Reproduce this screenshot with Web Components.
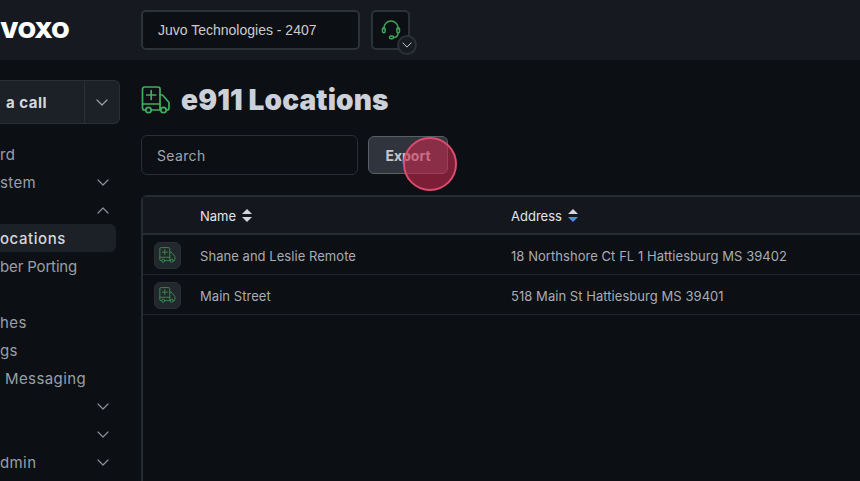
<!DOCTYPE html>
<html>
<head>
<meta charset="utf-8">
<title>e911 Locations</title>
<style>
    html, body { margin: 0; height: 100%; overflow: hidden; background: #0c0f14; }
    body { font-family: "Inter", "Liberation Sans", sans-serif; }
    voxo-app { width: 860px; height: 481px; }
</style>
</head>
<body>
<voxo-app>
    <voxo-topbar slot="top"></voxo-topbar>
    <voxo-sidebar slot="side">
        <voxo-call-button></voxo-call-button>
        <voxo-nav-item label="rd"></voxo-nav-item>
        <voxo-nav-item label="stem" chevron="down"></voxo-nav-item>
        <voxo-nav-item chevron="up"></voxo-nav-item>
        <voxo-nav-item active label="ocations"></voxo-nav-item>
        <voxo-nav-item tight label="ber Porting"></voxo-nav-item>
        <voxo-nav-item></voxo-nav-item>
        <voxo-nav-item label="hes"></voxo-nav-item>
        <voxo-nav-item label="gs"></voxo-nav-item>
        <voxo-nav-item indent label="Messaging"></voxo-nav-item>
        <voxo-nav-item chevron="down"></voxo-nav-item>
        <voxo-nav-item chevron="down"></voxo-nav-item>
        <voxo-nav-item label="dmin" chevron="down"></voxo-nav-item>
    </voxo-sidebar>
    <voxo-page-title slot="main">e911 Locations</voxo-page-title>
    <voxo-toolbar slot="main"></voxo-toolbar>
    <voxo-table slot="main">
        <voxo-row name="Shane and Leslie Remote" address="18 Northshore Ct FL 1 Hattiesburg MS 39402"></voxo-row>
        <voxo-row name="Main Street" address="518 Main St Hattiesburg MS 39401"></voxo-row>
    </voxo-table>
</voxo-app>

<script>
const truckIcon = `
    <svg viewBox="0 0 30 28" fill="none" stroke="currentColor" stroke-width="1.7" stroke-linecap="round" stroke-linejoin="round">
        <path d="M4.500 24H3.500a2 2 0 0 1-2-2V3a2 2 0 0 1 2-2H17a2 2 0 0 1 2 2V24"/>
        <path d="M1.500 18H19"/>
        <path d="M19 9h2.500l6.500 7.500V22a2 2 0 0 1-2 2H25.500"/>
        <path d="M10.500 24h9"/>
        <circle cx="7.500" cy="24" r="2.700"/>
        <circle cx="22.500" cy="24" r="2.700"/>
        <path d="M10.200 4.500v9M5.700 9h9"/>
    </svg>`;

const chevron = (dir) => `
    <svg viewBox="0 0 12 7" width="12" height="7" fill="none" stroke="currentColor" stroke-width="1.2" stroke-linecap="round" stroke-linejoin="round">
        <path d="${dir === "up" ? "M1 6l5-5 5 5" : "M1 1l5 5 5-5"}"/>
    </svg>`;

class VoxoApp extends HTMLElement {
    constructor() {
        super();
        this.attachShadow({mode: "open"});
    }

    connectedCallback() {
        this.shadowRoot.innerHTML = `
        <style>
            :host { display: grid; grid-template-columns: 130px 1fr; grid-template-rows: 60px 1fr; }
            .top { grid-column: 1 / 3; }
            .main { padding: 20px 0 0 11px; display: flex; flex-direction: column; overflow: hidden; }
        </style>
        <div class="top"><slot name="top"></slot></div>
        <div class="side"><slot name="side"></slot></div>
        <div class="main"><slot name="main"></slot></div>
        `;
    }
}

class VoxoTopbar extends HTMLElement {
    constructor() {
        super();
        this.attachShadow({mode: "open"});
    }

    connectedCallback() {
        this.shadowRoot.innerHTML = `
        <style>
            :host { display: flex; align-items: center; height: 60px; background: #161a20; }
            .logo { width: 141px; }
            .logo span {
                display: inline-block; transform: scaleX(1.07); transform-origin: left center;
                font: 900 22px "Inter", sans-serif; color: #fff;
            }
            .account {
                width: 219px; height: 40px; box-sizing: border-box; display: flex; align-items: center;
                padding-left: 15px; background: #0c0f14; border: 2px solid #2d3138; border-radius: 5px;
                font: 14px "Liberation Sans", sans-serif; color: #c9ccd1;
            }
            .support {
                position: relative; width: 39px; height: 40px; box-sizing: border-box; margin-left: 11px;
                display: flex; align-items: center; justify-content: center;
                background: #0c0f14; border: 2px solid #2d3138; border-radius: 5px; color: #3fa45b;
            }
            .support svg.headset { width: 20px; height: 20px; margin-top: -1px; }
            .badge {
                position: absolute; right: -9px; bottom: -7px; width: 20px; height: 20px; box-sizing: border-box;
                display: flex; align-items: center; justify-content: center;
                border-radius: 50%; background: #171b22; border: 2px solid #2d3138; color: #c9ccd1;
            }
            .badge svg { width: 10px; height: 6px; }
        </style>
        <div class="logo"><span>VOXO</span></div>
        <div class="account">Juvo Technologies - 2407</div>
        <div class="support">
            <svg class="headset" viewBox="0 0 20 20" fill="none" stroke="currentColor" stroke-width="1.5" stroke-linecap="round" stroke-linejoin="round">
                <path d="M3 9V8a7 7 0 0 1 14 0v1"/>
                <rect x="1.500" y="7.800" width="2.600" height="5" rx="1.300"/>
                <rect x="15.900" y="7.800" width="2.600" height="5" rx="1.300"/>
                <path d="M17 13c0 3-2 4.500-4.500 4.500"/>
                <rect x="8.500" y="16" width="4" height="2.800" rx="1.400"/>
            </svg>
            <div class="badge">${chevron("down")}</div>
        </div>
        `;
    }
}

class VoxoSidebar extends HTMLElement {
    constructor() {
        super();
        this.attachShadow({mode: "open"});
    }

    connectedCallback() {
        this.shadowRoot.innerHTML = `
        <style>
            :host { display: block; padding: 20px 0 0 0; }
            .nav { display: flex; flex-direction: column; margin-top: 16px; }
        </style>
        <slot name="call"></slot>
        <div class="nav"><slot></slot></div>
        `;
        this.querySelector("voxo-call-button").slot = "call";
    }
}

class VoxoCallButton extends HTMLElement {
    constructor() {
        super();
        this.attachShadow({mode: "open"});
    }

    connectedCallback() {
        this.shadowRoot.innerHTML = `
        <style>
            :host {
                display: flex; width: 120px; height: 44px; box-sizing: border-box;
                background: #1c2027; border: 1px solid #2a2e35; border-left: 0; border-radius: 0 6px 6px 0; color: #d5d8dd;
            }
            .label {
                flex: 1; display: flex; align-items: center; padding-left: 6px;
                font: 700 15px "Inter", sans-serif; letter-spacing: .5px;
            }
            .drop {
                width: 34px; display: flex; align-items: center; justify-content: center;
                border-left: 1px solid #2a2e35; color: #9ca1a8;
            }
        </style>
        <div class="label">a call</div>
        <div class="drop">${chevron("down")}</div>
        `;
    }
}

class VoxoNavItem extends HTMLElement {
    constructor() {
        super();
        this.attachShadow({mode: "open"});
    }

    connectedCallback() {
        const label = this.getAttribute("label") || "";
        const dir = this.getAttribute("chevron");
        this.shadowRoot.innerHTML = `
        <style>
            :host {
                display: flex; align-items: center; width: 116px; height: 28px; box-sizing: border-box;
                padding: 0 7px 0 0; border-radius: 0 6px 6px 0;
                font: 400 15px "Inter", sans-serif; letter-spacing: .4px; color: #9a9fa7;
            }
            :host([indent]) { padding-left: 5px; }
            :host([tight]) { letter-spacing: -.15px; }
            :host([active]) { background: #1c2027; color: #d5d8dd; font-weight: 500; letter-spacing: .55px; }
            .label { flex: 1; white-space: nowrap; }
            .chev { color: #8b9098; display: flex; }
        </style>
        <span class="label">${label}</span>
        ${dir ? `<span class="chev">${chevron(dir)}</span>` : ""}
        `;
    }
}

class VoxoPageTitle extends HTMLElement {
    constructor() {
        super();
        this.attachShadow({mode: "open"});
    }

    connectedCallback() {
        this.shadowRoot.innerHTML = `
        <style>
            :host {
                flex: none; display: flex; align-items: center; gap: 10px; height: 40px;
                font: 900 28px "Inter", sans-serif; letter-spacing: .15px; color: #ccd1d9;
            }
            .icon { width: 30px; height: 28px; color: #43ad5f; display: flex; }
        </style>
        <span class="icon">${truckIcon}</span>
        <slot></slot>
        `;
    }
}

class VoxoToolbar extends HTMLElement {
    constructor() {
        super();
        this.attachShadow({mode: "open"});
    }

    connectedCallback() {
        this.shadowRoot.innerHTML = `
        <style>
            :host { flex: none; display: flex; align-items: center; gap: 10px; margin-top: 15px; height: 40px; }
            .search {
                width: 217px; height: 40px; box-sizing: border-box; padding-left: 15px;
                display: flex; align-items: center;
                border: 1px solid #2a2e35; border-radius: 6px;
                font: 14px "Inter", sans-serif; letter-spacing: .35px; color: #a0a5ad;
            }
            .export {
                position: relative; width: 80px; height: 38px; box-sizing: border-box;
                display: flex; align-items: center; justify-content: center;
                background: #2f343d; border: 1px solid #5a5f68; border-radius: 6px;
                font: 700 14px "Inter", sans-serif; color: #c3c8d0;
            }
            .click {
                position: absolute; left: 34px; top: 0; width: 54px; height: 54px; box-sizing: border-box;
                border-radius: 50%; background: rgba(205, 42, 78, .58); border: 2.5px solid #dd4c6e;
            }
        </style>
        <div class="search">Search</div>
        <div class="export">Export<span class="click"></span></div>
        `;
    }
}

class VoxoTable extends HTMLElement {
    constructor() {
        super();
        this.attachShadow({mode: "open"});
    }

    connectedCallback() {
        const sort = (down) => `
            <svg viewBox="0 0 10 13" width="10" height="13">
                <path d="M5 0l5 5H0z" fill="#d3d6db"/>
                <path d="M5 13L0 8h10z" fill="${down}"/>
            </svg>`;
        this.shadowRoot.innerHTML = `
        <style>
            :host {
                flex: none; display: block; margin-top: 20px; border-top: 2px solid #262a31; border-left: 2px solid #262a31;
                border-top-left-radius: 6px; height: 300px;
            }
            .head {
                display: grid; grid-template-columns: 57px 311px 1fr; align-items: center;
                height: 38px; box-sizing: border-box; padding-top: 1px; background: #14181e; border-bottom: 2px solid #262a31;
                font: 400 13px "Inter", sans-serif; color: #e3e5e8;
            }
            .cell { display: flex; align-items: center; gap: 6px; }
        </style>
        <div class="head">
            <span></span>
            <span class="cell">Name ${sort("#d3d6db")}</span>
            <span class="cell">Address ${sort("#4a8fe0")}</span>
        </div>
        <slot></slot>
        `;
    }
}

class VoxoRow extends HTMLElement {
    constructor() {
        super();
        this.attachShadow({mode: "open"});
    }

    connectedCallback() {
        this.shadowRoot.innerHTML = `
        <style>
            :host {
                display: grid; grid-template-columns: 57px 311px 1fr; align-items: center;
                height: 40px; box-sizing: border-box; padding-top: 1px; border-bottom: 1.5px solid #23272d;
                font: 13px "Inter", sans-serif; letter-spacing: .05px; color: #a9adb4;
            }
            .text { padding-top: 1px; }
            .badge {
                width: 27px; height: 27px; box-sizing: border-box; margin-left: 11px;
                display: flex; align-items: center; justify-content: center;
                background: #23272e; border: 1px solid #2a2e35; border-radius: 6px; color: #378f50;
            }
            .badge svg { width: 17px; height: 16px; }
        </style>
        <span class="badge">${truckIcon}</span>
        <span class="text">${this.getAttribute("name")}</span>
        <span class="text">${this.getAttribute("address")}</span>
        `;
    }
}

customElements.define("voxo-app", VoxoApp);
customElements.define("voxo-topbar", VoxoTopbar);
customElements.define("voxo-sidebar", VoxoSidebar);
customElements.define("voxo-call-button", VoxoCallButton);
customElements.define("voxo-nav-item", VoxoNavItem);
customElements.define("voxo-page-title", VoxoPageTitle);
customElements.define("voxo-toolbar", VoxoToolbar);
customElements.define("voxo-table", VoxoTable);
customElements.define("voxo-row", VoxoRow);
</script>
</body>
</html>
